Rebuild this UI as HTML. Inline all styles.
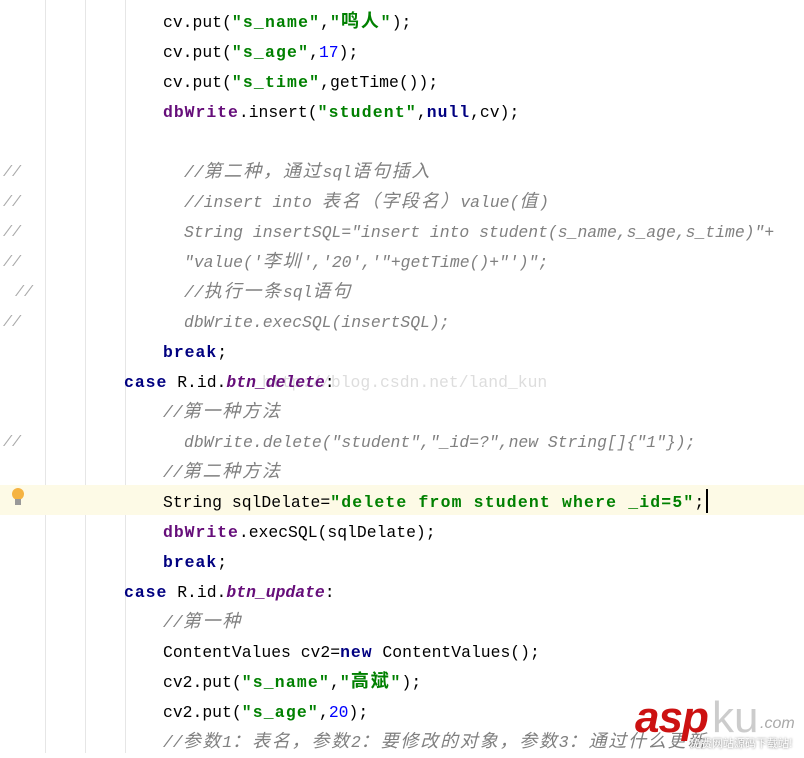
<!DOCTYPE html>
<html><head><meta charset="utf-8"><style>
body{margin:0;width:804px;height:753px;background:#fff;position:relative;overflow:hidden;font-family:"Liberation Mono","Noto Sans CJK SC",monospace;font-size:16.4px;color:#000}
.g{position:absolute;top:0;height:753px;width:1px;background:#e6e6e6}
.l{position:absolute;height:30px;line-height:30px;white-space:pre;top:0}
.k{color:#000080;font-weight:bold;letter-spacing:1px}
.s{color:#008000;font-weight:bold;letter-spacing:1.2px}
.n{color:#0000ff}
.c{color:#808080;font-style:italic}
.f{color:#660e7a;font-weight:bold;letter-spacing:1px}
.fi{color:#660e7a;font-weight:bold;font-style:italic}
.z{letter-spacing:1.8px;font-size:18px}
.gt{position:absolute;left:3px;color:#aaa;font-style:italic;font-size:15px;line-height:30px}
</style></head><body>
<div class="g" style="left:45px"></div><div class="g" style="left:85px"></div><div class="g" style="left:125px"></div>
<div style="position:absolute;left:0;top:485px;width:804px;height:30px;background:#fdfae6"></div>
<div class="l" style="top:8px;left:163px">cv.put(<span class="s">"s_name"</span>,<span class="s">"<span class="z">鸣人</span>"</span>);</div>
<div class="l" style="top:38px;left:163px">cv.put(<span class="s">"s_age"</span>,<span class="n">17</span>);</div>
<div class="l" style="top:68px;left:163px">cv.put(<span class="s">"s_time"</span>,getTime());</div>
<div class="l" style="top:98px;left:163px"><span class="f">dbWrite</span>.insert(<span class="s">"student"</span>,<span class="k">null</span>,cv);</div>
<div class="gt" style="top:158px">//</div><div class="gt" style="top:188px">//</div><div class="gt" style="top:218px">//</div><div class="gt" style="top:248px">//</div><div class="gt" style="top:278px;left:15px">//</div><div class="gt" style="top:308px">//</div><div class="gt" style="top:428px">//</div>
<div class="l c" style="top:158px;left:184px">//<span class="z">第二种，通过</span>sql<span class="z">语句插入</span></div>
<div class="l c" style="top:188px;left:184px">//insert into <span class="z">表名（字段名）</span>value(<span class="z">值</span>)</div>
<div class="l c" style="top:218px;left:184px">String insertSQL="insert into student(s_name,s_age,s_time)"+</div>
<div class="l c" style="top:248px;left:184px">"value('<span class="z">李圳</span>','20','"+getTime()+"')";</div>
<div class="l c" style="top:278px;left:184px">//<span class="z">执行一条</span>sql<span class="z">语句</span></div>
<div class="l c" style="top:308px;left:184px">dbWrite.execSQL(insertSQL);</div>
<div class="l" style="top:338px;left:163px"><span class="k">break</span>;</div>
<div class="l" style="top:368px;left:262px;color:#ddd">http://blog.csdn.net/land_kun</div>
<div class="l" style="top:368px;left:124px"><span class="k">case</span> R.id.<span class="fi">btn_delete</span>:</div>
<div class="l c" style="top:398px;left:163px">//<span class="z">第一种方法</span></div>
<div class="l c" style="top:428px;left:184px">dbWrite.delete("student","_id=?",new String[]{"1"});</div>
<div class="l c" style="top:458px;left:163px">//<span class="z">第二种方法</span></div>
<div style="position:absolute;left:12px;top:488px;width:12px;height:12px;border-radius:50%;background:#f5b342"></div><div style="position:absolute;left:15px;top:499px;width:6px;height:6px;background:#999"></div>
<div class="l" style="top:488px;left:163px">String sqlDelate=<span class="s">"delete from student where _id=5"</span>;</div>
<div style="position:absolute;left:706px;top:489px;width:2px;height:24px;background:#000"></div>
<div class="l" style="top:518px;left:163px"><span class="f">dbWrite</span>.execSQL(sqlDelate);</div>
<div class="l" style="top:548px;left:163px"><span class="k">break</span>;</div>
<div class="l" style="top:578px;left:124px"><span class="k">case</span> R.id.<span class="fi">btn_update</span>:</div>
<div class="l c" style="top:608px;left:163px">//<span class="z">第一种</span></div>
<div class="l" style="top:638px;left:163px">ContentValues cv2=<span class="k">new</span> ContentValues();</div>
<div class="l" style="top:668px;left:163px">cv2.put(<span class="s">"s_name"</span>,<span class="s">"<span class="z">高斌</span>"</span>);</div>
<div class="l" style="top:698px;left:163px">cv2.put(<span class="s">"s_age"</span>,<span class="n">20</span>);</div>
<div class="l c" style="top:728px;left:163px">//<span class="z">参数</span>1<span class="z">：表名，参数</span>2<span class="z">：要修改的对象，参数</span>3<span class="z">：通过什么更新</span></div>
<div style="position:absolute;left:635px;top:693px;font:italic bold 44px 'Liberation Sans',sans-serif;color:#cc1111;letter-spacing:-1px">asp</div>
<div style="position:absolute;left:712px;top:693px;font:44px 'Liberation Sans',sans-serif;color:#ccc">ku</div>
<div style="position:absolute;left:760px;top:715px;font:italic 16px 'Liberation Sans',sans-serif;color:#aaa">.com</div>
<div style="position:absolute;left:690px;top:735px;font:11px 'Noto Sans CJK SC',sans-serif;color:#fff;text-shadow:0 0 2px #666">免费网站源码下载站!</div>
</body></html>
